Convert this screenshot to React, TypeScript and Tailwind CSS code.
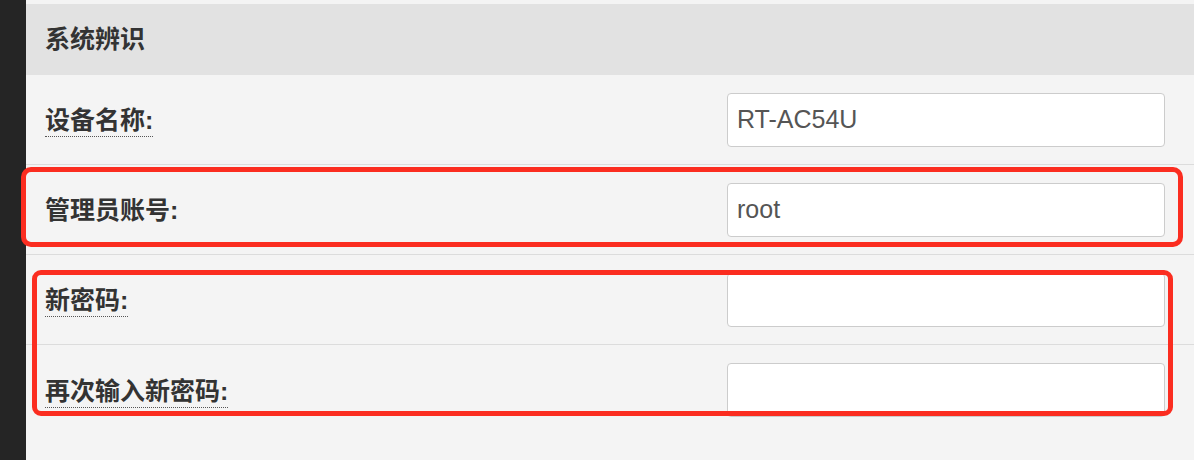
import React from "react";

const FONT = {
  fontFamily: '"Liberation Sans", "Noto Sans CJK SC", sans-serif',
};

function Row({
  label,
  value,
  dotted,
  last,
}: {
  label: string;
  value?: string;
  dotted?: boolean;
  last?: boolean;
}) {
  return (
    <div
      className={`flex h-[90px] items-center justify-between pl-[19px] pr-[29px] ${
        last ? "" : "border-b border-[#dcdcdc]"
      }`}
    >
      <span
        className={`text-[25px] font-bold leading-[28px] text-[#333] ${
          dotted ? "border-b border-dotted border-[#555] pb-[2px] mt-[4px]" : ""
        }`}
      >
        {label}
      </span>
      <div className="flex h-[54px] w-[438px] items-center rounded-[4px] border border-[#cccccc] bg-white px-[9px] text-[25px] text-[#555]">
        {value}
      </div>
    </div>
  );
}

export default function App() {
  return (
    <div className="relative flex h-[460px] w-[1194px] overflow-hidden bg-[#f4f4f4]" style={FONT}>
      <div className="w-[26px] shrink-0 bg-[#252525]" />
      <div className="flex flex-1 flex-col pt-[4px]">
        <div className="flex h-[71px] items-center bg-[#e2e2e2] pl-[19px] text-[25px] font-bold text-[#333]">
          系统辨识
        </div>
        <Row label="设备名称:" value="RT-AC54U" dotted />
        <Row label="管理员账号:" value="root" />
        <Row label="新密码:" dotted />
        <Row label="再次输入新密码:" dotted last />
      </div>
      <div className="pointer-events-none absolute left-[21px] top-[167px] h-[80px] w-[1162px] rounded-[10px] border-[5px] border-[#fb2d20]" />
      <div className="pointer-events-none absolute left-[32px] top-[270px] h-[146px] w-[1141px] rounded-[9px] border-[5px] border-[#fb2d20]" />
    </div>
  );
}
